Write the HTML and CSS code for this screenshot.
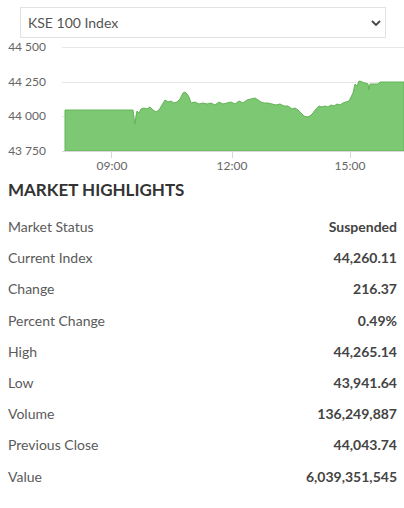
FILE: index.html
```html
<!DOCTYPE html>
<html lang="en">

<head>
  <meta charset="UTF-8">
  <meta name="viewport" content="width=device-width, initial-scale=1.0">
  <title>KSE 100 Index</title>
  <link rel="stylesheet" href="styles.css">
</head>

<body>
  <!-- Index picker -->
  <div class="picker-wrap">
    <div class="picker">
      <span>KSE 100 Index</span>
      <svg class="chevron" width="10" height="6" viewBox="0 0 10 6">
        <path d="M1 1 L5 5 L9 1" fill="none" stroke="#444" stroke-width="1.8" />
      </svg>
    </div>
  </div>

  <!-- Intraday chart -->
  <svg class="chart" width="404" height="135" viewBox="0 40 404 135">
    <g class="grid">
      <line x1="62" y1="47.5" x2="404" y2="47.5" />
      <line x1="62" y1="82.5" x2="404" y2="82.5" />
      <line x1="62" y1="116.5" x2="404" y2="116.5" />
    </g>
    <path class="area" d="M65,151 L65,110 L133,110 L134,118 L135,124 L136,116 L137,111 L139,113 L141,109 L144,108 L147,109 L150,107 L153,110 L156,112 L159,110 L162,105 L165,100 L168,102 L171,101 L174,103 L177,102 L180,99 L183,93 L185,92 L187,94 L189,97 L191,103 L195,102 L199,104 L203,103 L207,104 L211,103 L215,105 L219,102 L223,104 L227,103 L231,102 L235,104 L239,101 L243,103 L247,100 L251,99 L255,98 L258,100 L261,102 L264,103 L268,103 L272,104 L276,105 L280,104 L284,106 L288,106 L292,109 L295,108 L298,110 L301,113 L304,116 L307,117 L310,116 L313,113 L316,109 L319,106 L322,107 L325,106 L328,107 L331,105 L334,106 L337,104 L340,105 L343,103 L346,102 L349,101 L351,97 L353,93 L355,84 L357,86 L359,81 L362,82 L365,83 L368,84 L369,90 L370,84 L373,84 L378,84 L380,82 L404,82 L404,151 Z" />
    <g class="axis">
      <line x1="62" y1="151.5" x2="404" y2="151.5" />
      <line x1="111.5" y1="151" x2="111.5" y2="158" />
      <line x1="232.5" y1="151" x2="232.5" y2="158" />
      <line x1="350.5" y1="151" x2="350.5" y2="158" />
    </g>
    <g class="ylabels">
      <text x="46" y="51">44 500</text>
      <text x="46" y="86">44 250</text>
      <text x="46" y="120">44 000</text>
      <text x="46" y="155">43 750</text>
    </g>
    <g class="xlabels">
      <text x="112" y="170">09:00</text>
      <text x="232" y="170">12:00</text>
      <text x="350" y="170">15:00</text>
    </g>
  </svg>

  <!-- Highlights table -->
  <h2 class="title">MARKET HIGHLIGHTS</h2>
  <div class="highlights">
    <div class="row"><span>Market Status</span><b>Suspended</b></div>
    <div class="row"><span>Current Index</span><b>44,260.11</b></div>
    <div class="row"><span>Change</span><b>216.37</b></div>
    <div class="row"><span>Percent Change</span><b>0.49%</b></div>
    <div class="row"><span>High</span><b>44,265.14</b></div>
    <div class="row"><span>Low</span><b>43,941.64</b></div>
    <div class="row"><span>Volume</span><b>136,249,887</b></div>
    <div class="row"><span>Previous Close</span><b>44,043.74</b></div>
    <div class="row"><span>Value</span><b>6,039,351,545</b></div>
  </div>
</body>

</html>
```

FILE: styles.css
```css
/* General body styling */
body {
  font-family: Lato, "Open Sans", sans-serif;
  margin: 0;
  padding: 0;
  background: #fff;
  color: #555;
}

/* Index picker */
.picker-wrap {
  padding: 7px 18px 0 20px;
}

.picker {
  display: flex;
  align-items: center;
  justify-content: space-between;
  height: 29px;
  border: 1px solid #e2e2e2;
  padding: 0 4px 0 7px;
  font-size: 14px;
  color: #555;
}

/* Chart */
.chart {
  display: block;
  margin-top: 2px;
}

.grid line {
  stroke: #e6e6e6;
  stroke-width: 1;
}

.axis line {
  stroke: #d8d8d8;
  stroke-width: 1;
}

.area {
  fill: #7dc873;
  stroke: #62b356;
  stroke-width: 1;
}

.ylabels text {
  font-size: 12px;
  fill: #666;
  text-anchor: end;
}

.xlabels text {
  font-size: 12px;
  fill: #666;
  text-anchor: middle;
}

/* Highlights */
.title {
  margin: 5px 0 0 8px;
  font-size: 17px;
  line-height: 20px;
  font-weight: 700;
  color: #333;
}

.highlights {
  margin-top: 11px;
  padding: 0 7px 0 8px;
}

.row {
  display: flex;
  justify-content: space-between;
  height: 31.2px;
  line-height: 31.2px;
  font-size: 14px;
}

.row span {
  color: #5a5a5a;
}

.row b {
  font-weight: 700;
  color: #444;
}
```
